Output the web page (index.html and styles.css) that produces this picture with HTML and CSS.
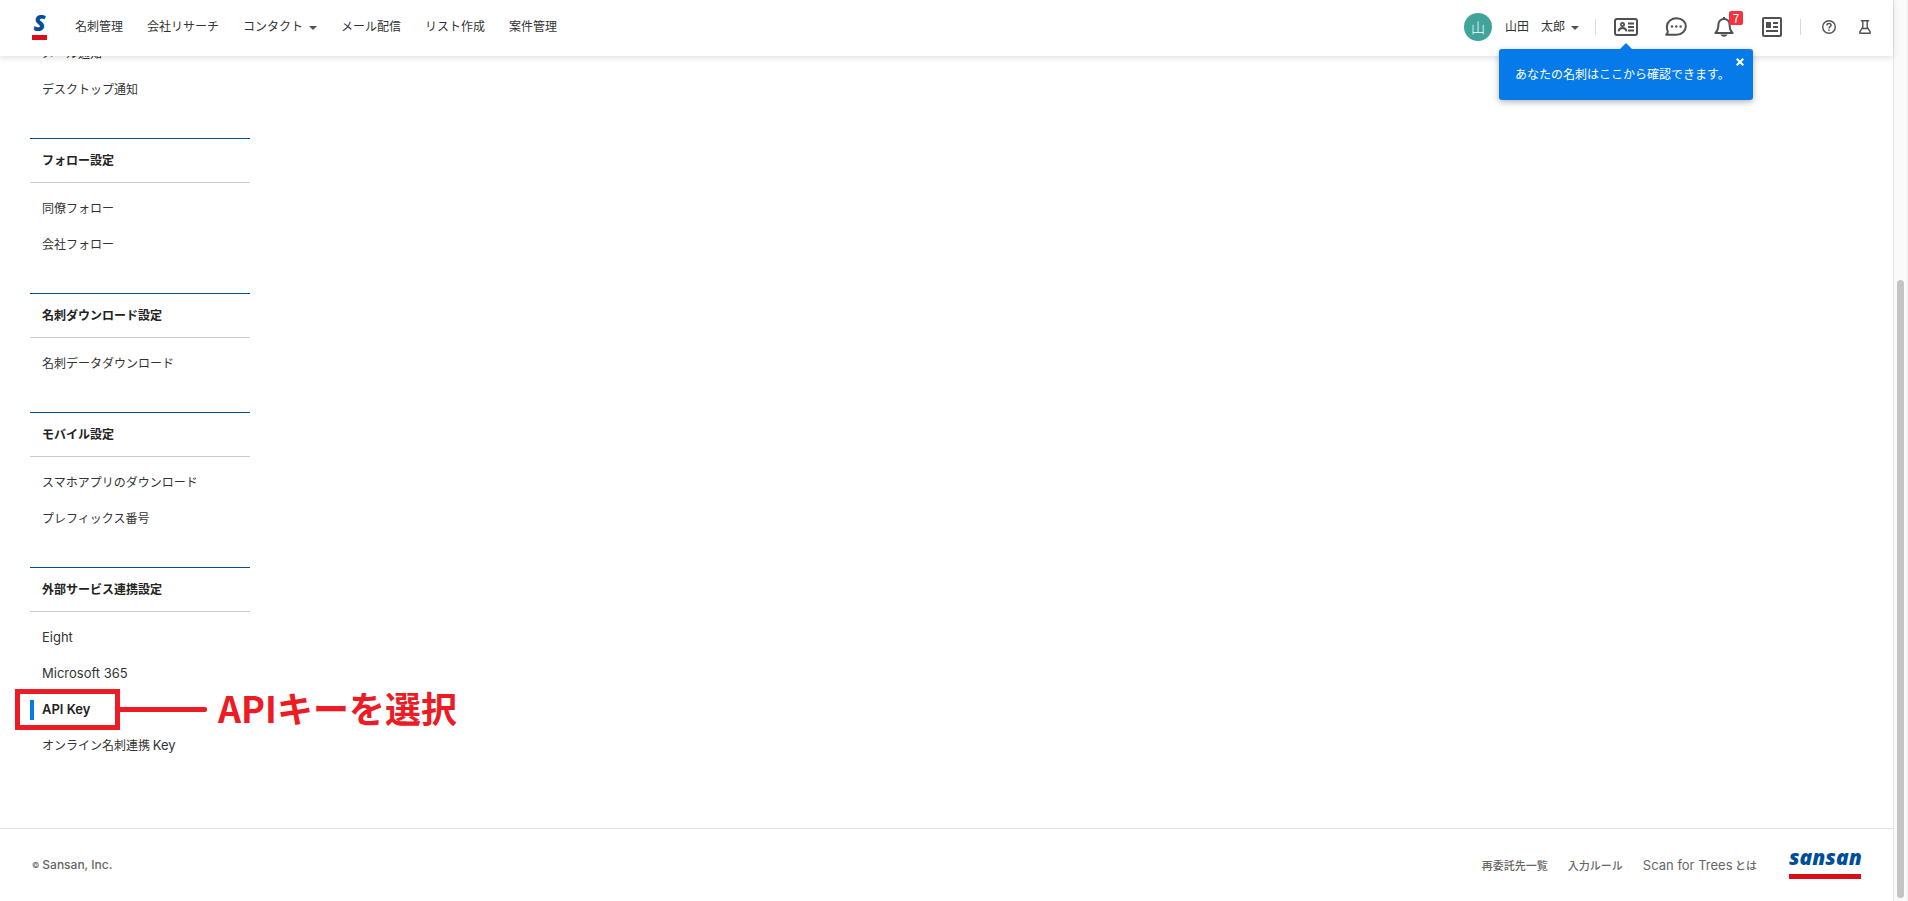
FILE: index.html
```html
<!DOCTYPE html>
<html lang="ja">
<head>
  <meta charset="UTF-8">
  <meta name="viewport" content="width=device-width, initial-scale=1.0">
  <title>Sansan - API Key</title>
  <link rel="stylesheet" href="styles.css">
</head>
<body>

<div class="page">
  <header class="header">
    <a class="logo" href="#" aria-label="Sansan"><span class="logo-text">S</span></a>
    <nav class="nav">
      <a href="#">名刺管理</a>
      <a href="#">会社リサーチ</a>
      <button type="button" class="menu-btn">コンタクト<span class="caret"></span></button>
      <a href="#">メール配信</a>
      <a href="#">リスト作成</a>
      <a href="#">案件管理</a>
    </nav>

    <div class="tools">
      <button type="button" class="user"><span class="avatar">山</span><span class="user-name">山田　太郎<span class="caret"></span></span></button>
      <span class="divider"></span>
      <div class="tool-icons">
        <div class="card-tool">
          <button type="button" class="icon-btn" aria-label="名刺">
            <svg width="24" height="20" viewBox="0 0 24 20" fill="none" stroke="#505050" stroke-width="2">
              <rect x="1" y="2" width="22" height="16" rx="2"/>
              <circle cx="8.500" cy="7.500" r="1.600" stroke-width="1.800"/>
              <path d="M4.500 14.300c.3-2.200 1.700-3.300 4-3.300s3.700 1.100 4 3.300" stroke-width="1.800"/>
              <path d="M14 6.500h6M14 10h6M14 13.500h6" stroke-width="1.800"/>
            </svg>
          </button>
          <div class="tooltip">
            あなたの名刺はここから確認できます。
            <button type="button" class="tooltip-close" aria-label="閉じる">
              <svg width="8" height="8" viewBox="0 0 8 8" stroke="#fff" stroke-width="2"><path d="M.7.7l6.600 6.600M7.300.7L.7 7.300"/></svg>
            </button>
          </div>
        </div>
        <button type="button" class="icon-btn" aria-label="メッセージ">
          <svg width="22" height="20" viewBox="0 0 22 20">
            <path d="M11.500 1.200c5.300 0 9.300 3.500 9.300 8.200s-4 8.400-9.300 8.400H1.200c1.200-1.200 1.700-2.200 1.600-3.600C1.900 12.700 1.700 11 1.900 9c.4-4.500 4.500-7.800 9.600-7.800z" fill="none" stroke="#505050" stroke-width="2" stroke-linejoin="round"/>
            <circle cx="7" cy="9.500" r="1.200" fill="#505050"/><circle cx="11.300" cy="9.500" r="1.200" fill="#505050"/><circle cx="15.600" cy="9.500" r="1.200" fill="#505050"/>
          </svg>
        </button>
        <button type="button" class="icon-btn" aria-label="通知">
          <svg width="21" height="20" viewBox="0 0 21 20">
            <path d="M10 0v2M10 2c-3.400 0-5.600 2.500-5.600 5.700 0 4.200-1 6.300-3 8.300h17.200c-2-2-3-4.100-3-8.300C15.600 4.500 13.400 2 10 2z" fill="none" stroke="#505050" stroke-width="2" stroke-linejoin="round"/>
            <path d="M6.500 17.500h7c-.5 1.400-1.700 2.200-3.500 2.200s-3-.8-3.500-2.200z" fill="#505050"/>
          </svg>
          <span class="badge">7</span>
        </button>
        <button type="button" class="icon-btn" aria-label="ニュース">
          <svg width="20" height="20" viewBox="0 0 20 20">
            <rect x="1" y="1" width="18" height="18" rx="1" fill="none" stroke="#505050" stroke-width="2"/>
            <path d="M4 5h5v6H4zM11 5h5v2h-5zM11 9h5v2h-5zM4 13h12v2H4z" fill="#505050"/>
          </svg>
        </button>
      </div>
      <span class="divider"></span>
      <div class="help-icons">
        <button type="button" class="icon-btn" aria-label="ヘルプ">
          <svg width="14" height="14" viewBox="0 0 14 14" fill="none" stroke="#505050" stroke-width="1.400">
            <circle cx="7" cy="7" r="6.300"/>
            <path d="M4.900 5.600C4.900 4.200 5.800 3.500 7 3.500s2.100.7 2.100 1.800C9.100 6.700 7 6.700 7 8.400M7 9.500v1.500"/>
          </svg>
        </button>
        <button type="button" class="icon-btn" aria-label="ラボ">
          <svg width="12" height="14" viewBox="0 0 12 14" fill="none" stroke="#505050" stroke-width="1.400" stroke-linejoin="round">
            <path d="M1.800.8h8.400M3.800.8v6.400L.8 11.800v1.500h10.400v-1.500l-3-4.600V.8M3.500 8.500h5"/>
          </svg>
        </button>
      </div>
    </div>
  </header>

  <main class="main">
    <aside class="sidebar">
      <ul class="menu">
        <li><a href="#">メール通知</a></li>
        <li><a href="#">デスクトップ通知</a></li>
      </ul>

      <h2 class="menu-title">フォロー設定</h2>
      <ul class="menu">
        <li><a href="#">同僚フォロー</a></li>
        <li><a href="#">会社フォロー</a></li>
      </ul>

      <h2 class="menu-title">名刺ダウンロード設定</h2>
      <ul class="menu">
        <li><a href="#">名刺データダウンロード</a></li>
      </ul>

      <h2 class="menu-title">モバイル設定</h2>
      <ul class="menu">
        <li><a href="#">スマホアプリのダウンロード</a></li>
        <li><a href="#">プレフィックス番号</a></li>
      </ul>

      <h2 class="menu-title">外部サービス連携設定</h2>
      <ul class="menu">
        <li><a href="#" class="latin">Eight</a></li>
        <li><a href="#" class="latin">Microsoft 365</a></li>
        <li class="current">
          <a href="#" class="latin">API Key</a>
          <div class="callout">
            <span class="callout-box"></span>
            <span class="callout-line"></span>
            <span class="callout-text">APIキーを選択</span>
          </div>
        </li>
        <li><a href="#">オンライン名刺連携 <span class="latin">Key</span></a></li>
      </ul>
    </aside>
  </main>

  <footer class="footer">
    <p class="copyright"><small>©</small>Sansan, Inc.</p>
    <nav class="footer-nav">
      <a href="#">再委託先一覧</a>
      <a href="#">入力ルール</a>
      <a href="#"><span class="latin">Scan for Trees</span> とは</a>
      <a href="#" class="footer-logo">sansan</a>
    </nav>
  </footer>
</div>

<div class="scrollbar"><div class="thumb"></div></div>

</body>
</html>
```

FILE: styles.css
```css
* {
  margin: 0;
  padding: 0;
  box-sizing: border-box;
}

body {
  display: flex;
  min-height: 100vh;
  background: #fff;
  color: #333;
  font-family: "Noto Sans CJK JP", sans-serif;
  font-size: 12px;
  line-height: 18px;
}

a {
  color: inherit;
  text-decoration: none;
}

button {
  border: none;
  background: none;
  color: inherit;
  font: inherit;
  cursor: pointer;
}

ul {
  list-style: none;
}

svg {
  display: block;
}

.page {
  position: relative;
  flex: 1;
  display: flex;
  flex-direction: column;
}

/* header */
.header {
  position: absolute;
  top: 0;
  left: 0;
  right: 0;
  z-index: 10;
  display: flex;
  align-items: center;
  height: 56px;
  padding: 0 22px 2px 32px;
  background: #fff;
  box-shadow: 0 2px 6px rgba(0, 0, 0, 0.12);
}

.logo {
  width: 15px;
  margin-right: 28px;
  border-bottom: 5px solid #dc0d18;
}

.logo-text {
  display: block;
  height: 21px;
  color: #004e9a;
  font: italic 800 22px/16px "Open Sans", sans-serif;
  text-align: center;
}

.nav {
  display: flex;
  gap: 24px;
  padding-bottom: 2px;
}

.caret {
  display: inline-block;
  margin-left: 6px;
  border: 4px solid transparent;
  border-top-color: #505050;
  border-bottom: 0;
  vertical-align: middle;
}

.tools {
  display: flex;
  align-items: center;
  margin-left: auto;
}

.user {
  display: flex;
  align-items: center;
  margin-right: 16px;
}

.user-name {
  padding-bottom: 2px;
}

.avatar {
  width: 28px;
  height: 28px;
  margin-right: 13px;
  border-radius: 50%;
  background: #40a49b;
  color: #fff;
  font-size: 14px;
  font-weight: 300;
  line-height: 28px;
}

.divider {
  width: 1px;
  height: 16px;
  background: #d8d8d8;
}

.tool-icons {
  display: flex;
  align-items: center;
  gap: 27px;
  margin: 0 18px;
}

.help-icons {
  display: flex;
  align-items: center;
  gap: 23px;
  margin-left: 21px;
}

.icon-btn,
.card-tool {
  position: relative;
  display: flex;
}

.badge {
  position: absolute;
  top: -6px;
  right: -8px;
  width: 14px;
  height: 14px;
  border-radius: 2px;
  background: #f5333f;
  color: #fff;
  font-size: 12px;
  line-height: 14px;
}

.tooltip {
  position: absolute;
  top: 32px;
  left: -115px;
  width: 254px;
  padding: 16px 16px 17px;
  border-radius: 3px;
  background: #067ae8;
  color: #fff;
  box-shadow: 0 2px 6px rgba(0, 0, 0, 0.3);
  white-space: nowrap;
}

.tooltip::before {
  content: "";
  position: absolute;
  top: -6px;
  left: 121px;
  border: 6px solid transparent;
  border-top: 0;
  border-bottom-color: #067ae8;
}

.tooltip-close {
  position: absolute;
  top: 9px;
  right: 9px;
}

/* settings menu */
.main {
  flex: 1;
  padding: 36px 30px 34px;
}

.sidebar {
  width: 220px;
}

.menu {
  margin-bottom: 30px;
}

.menu li {
  position: relative;
  padding: 8px 12px 10px;
}

.menu a {
  display: block;
}

.menu-title {
  margin-bottom: 8px;
  padding: 12px 12px 13px;
  border-top: 1px solid #004e9a;
  border-bottom: 1px solid #ccc;
  color: #222;
  font-size: 12px;
  font-weight: bold;
  line-height: 18px;
}

.latin {
  font-family: Inter, "Noto Sans CJK JP", sans-serif;
  font-size: 13px;
}

.current {
  color: #222;
  font-weight: 600;
}

.current::before {
  content: "";
  position: absolute;
  top: 8px;
  left: 0;
  width: 4px;
  height: 20px;
  background: #067ae8;
}

.callout {
  position: absolute;
  top: -3px;
  left: -15px;
  display: flex;
  align-items: center;
  color: #ed1c24;
}

.callout-box {
  width: 105px;
  height: 41px;
  border: 5px solid #ed1c24;
}

.callout-line {
  width: 87px;
  height: 5px;
  border-radius: 0 2px 2px 0;
  background: #ed1c24;
}

.callout-text {
  height: 41px;
  margin-left: 11px;
  font-size: 36px;
  font-weight: bold;
  line-height: 36px;
  white-space: nowrap;
}

/* footer */
.footer {
  display: flex;
  align-items: center;
  justify-content: space-between;
  height: 73px;
  padding: 0 32px;
  border-top: 1px solid #ddd;
  color: #666;
}

.copyright {
  display: flex;
  align-items: center;
  gap: 3px;
  font-family: Inter, sans-serif;
  font-weight: 500;
}

.copyright small {
  font-size: 8px;
}

.footer-nav {
  display: flex;
  align-items: center;
  gap: 20px;
  font-size: 11px;
  font-weight: 500;
}

.footer-nav .latin {
  font-weight: 400;
}

.footer-logo {
  width: 72px;
  height: 28px;
  margin-left: 12px;
  border-bottom: 5px solid #dc0d18;
  color: #004e9a;
  font: italic 800 21px/12px "Open Sans", sans-serif;
}

/* scroll track */
.scrollbar {
  display: flex;
  align-items: flex-end;
  width: 15px;
  padding: 3px;
  border-left: 1px solid #e4e4e4;
  border-right: 1px solid #ededed;
  background: #fafafa;
}

.thumb {
  width: 8px;
  height: 69%;
  border-radius: 4px;
  background: #c4c4c4;
}
```
